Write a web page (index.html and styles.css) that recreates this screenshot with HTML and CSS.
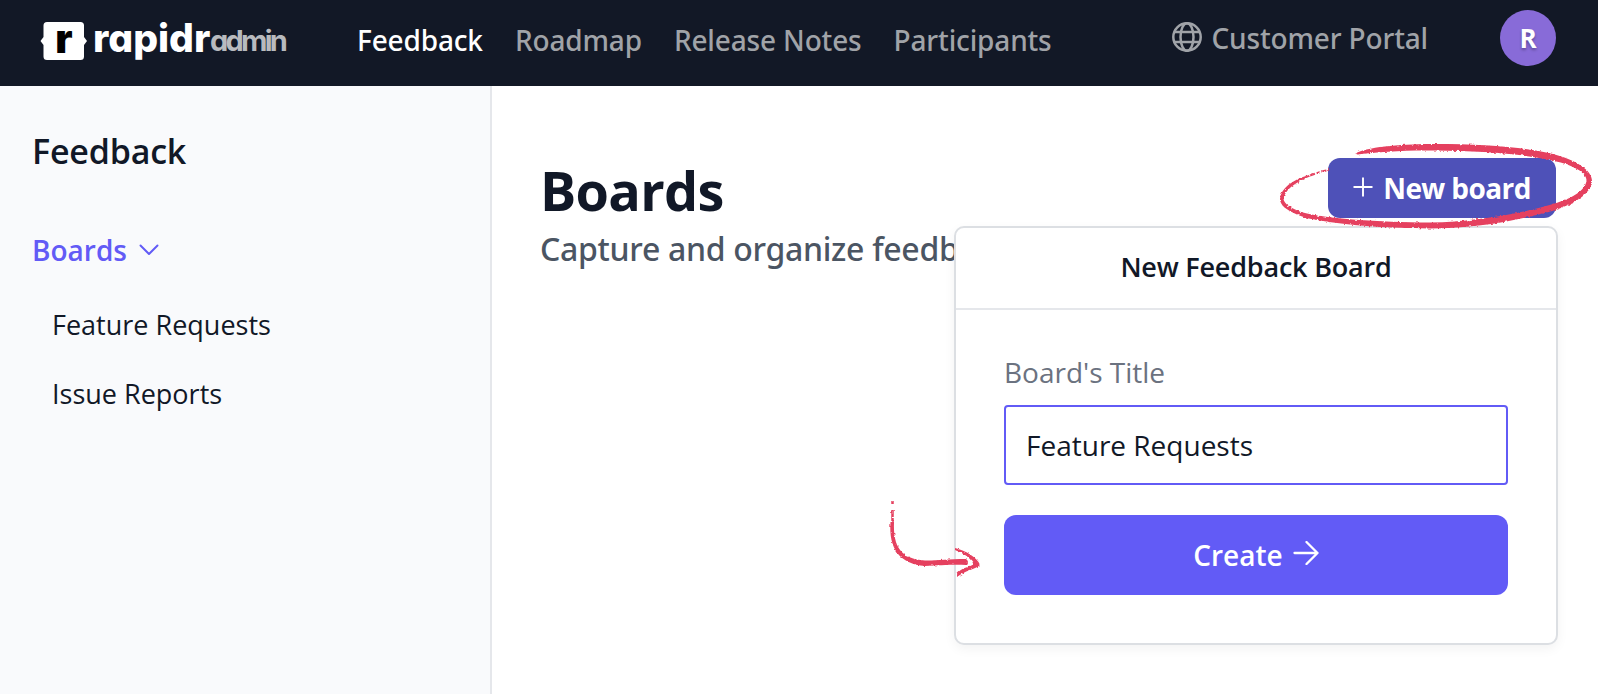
FILE: index.html
```html
<!DOCTYPE html>
<html lang="en">
<head>
  <meta charset="UTF-8">
  <title>Rapidr Admin - Boards</title>
  <meta name="viewport" content="width=device-width, initial-scale=1.0">
  <link rel="stylesheet" href="styles.css">
</head>
<body>

<header class="topbar">
  <a class="logo" href="#">
    <span class="logo-mark">
      <svg class="logo-shape" viewBox="0 0 48 40">
        <path d="M7 2h33.500q3.500 0 3.500 3.500v11.500l3 4-3 4v11.500q0 3.500-3.500 3.500H7q-3.500 0-3.500-3.500v-11.500L.5 21l3-4V5.500Q3.500 2 7 2z" fill="#fff"/>
      </svg>
      <span class="logo-letter">r</span>
    </span>
    <span class="logo-name">rapidr</span>
    <span class="logo-admin">admin</span>
  </a>

  <nav class="nav">
    <a class="nav-link active" href="#">Feedback</a>
    <a class="nav-link" href="#">Roadmap</a>
    <a class="nav-link" href="#">Release Notes</a>
    <a class="nav-link" href="#">Participants</a>
  </nav>

  <a class="portal" href="#">
    <svg class="portal-icon" viewBox="0 0 30 30" fill="none" stroke="currentColor" stroke-width="2.500">
      <circle cx="15" cy="15" r="13.700"/>
      <ellipse cx="15" cy="15" rx="6.500" ry="13.700"/>
      <path d="M3 10h24M3 20h24"/>
    </svg>
    <span>Customer Portal</span>
  </a>
  <div class="avatar">R</div>
</header>

<div class="layout">
  <aside class="sidebar">
    <h2>Feedback</h2>
    <a class="side-group" href="#">
      <span>Boards</span>
      <svg class="chevron" viewBox="0 0 20 12" fill="none" stroke="currentColor" stroke-width="2" stroke-linecap="round" stroke-linejoin="round">
        <path d="M1.500 1.500l8.500 8.500 8.500-8.500"/>
      </svg>
    </a>
    <a class="side-link" href="#">Feature Requests</a>
    <a class="side-link" href="#">Issue Reports</a>
  </aside>

  <main class="main">
    <div class="page-head">
      <div class="page-title">
        <h1>Boards</h1>
        <p>Capture and organize feedback</p>
      </div>
      <button class="new-btn">
        <svg class="plus" viewBox="0 0 20 20" stroke="currentColor" stroke-width="1.900">
          <path d="M10 .5v19M.5 10h19"/>
        </svg>
        <span>New board</span>
      </button>

      <!-- New board popover -->
      <div class="popover">
        <div class="popover-title">New Feedback Board</div>
        <form class="popover-body">
          <label for="title">Board's Title</label>
          <input type="text" id="title" value="Feature Requests">
          <button type="button" class="create-btn">
            <span>Create</span>
            <svg class="arrow" viewBox="0 0 26 24" fill="none" stroke="currentColor" stroke-width="2.300" stroke-linecap="round" stroke-linejoin="round">
              <path d="M1.500 12h23M13.500 1l11 11-11 11"/>
            </svg>
          </button>
        </form>
      </div>
    </div>
  </main>
</div>

<!-- Hand drawn marks -->
<svg class="marks" viewBox="0 0 1598 694">
  <filter id="rough" x="-5%" y="-10%" width="110%" height="120%">
    <feTurbulence type="fractalNoise" baseFrequency="0.350" numOctaves="2" seed="4"/>
    <feDisplacementMap in="SourceGraphic" scale="3" xChannelSelector="R" yChannelSelector="G"/>
  </filter>
  <g fill="#e5405f" filter="url(#rough)">
    <path d="M1356 153C1372 146 1404 144 1436 144C1482 144 1526 147 1553 154C1576 160 1592 170 1592 181C1591 198 1562 210 1532 216C1500 224 1462 228.500 1430 228.500C1380 228 1322 224 1298 215C1286 210 1280 205 1280 199C1281 188 1292 180 1309 175L1310 176.500C1295 182 1284 191 1283.500 199C1284 204 1291 208 1301 212C1326 219 1378 222 1430 222.500C1464 222 1500 217 1530 210C1562 203 1586 194 1586.500 180C1586 171 1570 164 1550 160C1516 153 1478 151 1436 150.500C1404 150 1378 152 1357 154.500z"/>
    <path d="M890.500 522h3.500C893 547 901 559 925 560.500C940 560.500 948 559 966 559Q970 562 966 565C950 564.500 940 565.500 925 566C900 564 888.500 549 890.500 522z"/>
    <path d="M955 548C966 551 977 557 980 565C976 569 964 571 957 577L957 573.500C961 568 968 567.500 973.500 564.500C971.500 558.500 964 553.500 955 550z"/>
  </g>
  <g fill="none" stroke="#e5405f" filter="url(#rough)">
    <path d="M1310 175.500C1320 172 1324 171 1329 170" stroke-width="2" stroke-dasharray="5 2 3 2"/>
    <path d="M892.500 501v3M892.500 510v14" stroke-width="2.500" stroke-dasharray="7 1"/>
  </g>
</svg>

</body>
</html>
```
FILE: styles.css
```css
* {
  box-sizing: border-box;
}

html, body {
  margin: 0;
  padding: 0;
  height: 100%;
  font-family: "Open Sans", sans-serif;
  color: #111827;
  background: #fff;
}

body {
  display: flex;
  flex-direction: column;
  overflow: hidden;
}

a {
  color: inherit;
  text-decoration: none;
}

h1, h2, p {
  margin: 0;
}

svg {
  display: block;
  flex: none;
}

.topbar {
  height: 86px;
  flex: none;
  background: #121826;
  display: flex;
  align-items: flex-start;
  padding: 0 42px 0 40px;
  white-space: nowrap;
}

/* logo */
.logo {
  width: 317px;
  height: 86px;
  display: flex;
  font-family: Inter, sans-serif;
  font-feature-settings: "cv11";
  line-height: 40px;
  padding-top: 20px;
}

.logo-mark {
  display: grid;
  width: 48px;
  height: 40px;
  margin-right: 5px;
}

.logo-shape,
.logo-letter {
  grid-area: 1 / 1;
}

.logo-shape {
  width: 48px;
  height: 40px;
}

.logo-letter {
  color: #000;
  font-size: 40px;
  font-weight: 900;
  line-height: 37px;
  text-align: center;
}

.logo-name {
  color: #fff;
  font-size: 39px;
  font-weight: 800;
  width: 117px;
  line-height: 36px;
  letter-spacing: 0;
}

.logo-admin {
  color: #b8babe;
  font-size: 29px;
  font-weight: 700;
  line-height: 42px;
  letter-spacing: -2.800px;
}

.nav {
  display: flex;
  gap: 32px;
  font-family: "Noto Sans", sans-serif;
  font-size: 28px;
  font-weight: 500;
  line-height: 40px;
  letter-spacing: -0.150px;
  padding-top: 20px;
}

.nav-link,
.portal {
  color: #a0a3a8;
}

.nav-link.active {
  color: #fff;
}

.portal {
  display: flex;
  gap: 9px;
  margin-left: auto;
  font-family: "Noto Sans", sans-serif;
  font-size: 28px;
  font-weight: 500;
  line-height: 40px;
  letter-spacing: -0.150px;
  padding-top: 18px;
}

.portal-icon {
  width: 30px;
  height: 30px;
  margin-top: 4px;
}

.avatar {
  width: 56px;
  height: 56px;
  margin: 10px 0 0 72px;
  border-radius: 50%;
  background: #886bd8;
  color: #fff;
  font-size: 26px;
  font-weight: 700;
  line-height: 56px;
  text-align: center;
  text-shadow: 0 2px 3px rgba(0, 0, 0, 0.3);
}

.layout {
  flex: 1;
  display: flex;
}

.sidebar {
  width: 492px;
  background: #f9fafc;
  border-right: 2px solid #e5e7eb;
  padding: 41px 32px;
}

.sidebar h2 {
  font-size: 34px;
  font-weight: 600;
  line-height: 48px;
  letter-spacing: -0.200px;
}

.side-group {
  display: flex;
  align-items: center;
  gap: 12px;
  margin-top: 55px;
  color: #625bf6;
  font-size: 28px;
  font-weight: 600;
  line-height: 40px;
}

.chevron {
  width: 20px;
  height: 12px;
}

.side-link {
  display: block;
  margin-left: 20px;
  padding-top: 35px;
  font-size: 27px;
  line-height: 34px;
}

.side-group + .side-link {
  padding-top: 38px;
}

.main {
  flex: 1;
  padding: 72px 42px 0 48px;
}

.page-head {
  position: relative;
  display: flex;
  justify-content: space-between;
  align-items: flex-start;
}

.page-title h1 {
  font-size: 54px;
  font-weight: 700;
  line-height: 65px;
  letter-spacing: -0.700px;
}

.page-title p {
  font-family: "Noto Sans", sans-serif;
  font-size: 32px;
  font-weight: 500;
  line-height: 52px;
  letter-spacing: -0.300px;
  color: #4b5563;
}

button {
  font-family: inherit;
  border: none;
  color: #fff;
  display: flex;
  align-items: center;
  justify-content: center;
  cursor: pointer;
}

.new-btn {
  width: 228px;
  height: 60px;
  gap: 10px;
  padding: 0;
  border-radius: 12px;
  background: #4e51b8;
  font-size: 28px;
  font-weight: 700;
  letter-spacing: -0.600px;
}

.plus {
  width: 20px;
  height: 20px;
  margin-bottom: 3px;
}

.popover {
  position: absolute;
  top: 68px;
  right: -2px;
  width: 604px;
  height: 419px;
  background: #fff;
  border: 2px solid #dcdfe3;
  border-radius: 10px;
  box-shadow: 0 4px 12px rgba(0, 0, 0, 0.05);
}

.popover-title {
  height: 82px;
  border-bottom: 2px solid #e5e7eb;
  text-align: center;
  font-size: 27px;
  font-weight: 600;
  line-height: 78px;
  letter-spacing: -0.200px;
}

.popover-body {
  padding: 42px 48px;
}

.popover-body label {
  display: block;
  color: #6b7280;
  font-size: 28px;
  line-height: 40px;
}

.popover-body input {
  display: block;
  width: 100%;
  height: 80px;
  margin-top: 13px;
  padding: 0 20px;
  border: 2px solid #625bf6;
  border-radius: 4px;
  font-family: inherit;
  font-size: 28px;
  color: #111827;
  outline: none;
}

.create-btn {
  width: 100%;
  height: 80px;
  margin-top: 30px;
  gap: 10px;
  border-radius: 12px;
  background: #625bf6;
  font-size: 28px;
  font-weight: 600;
}

.arrow {
  width: 26px;
  height: 24px;
  margin-bottom: 4px;
}

/* drawn over the whole page */
.marks {
  position: absolute;
  top: 0;
  left: 0;
  width: 1598px;
  height: 694px;
  pointer-events: none;
}
```
